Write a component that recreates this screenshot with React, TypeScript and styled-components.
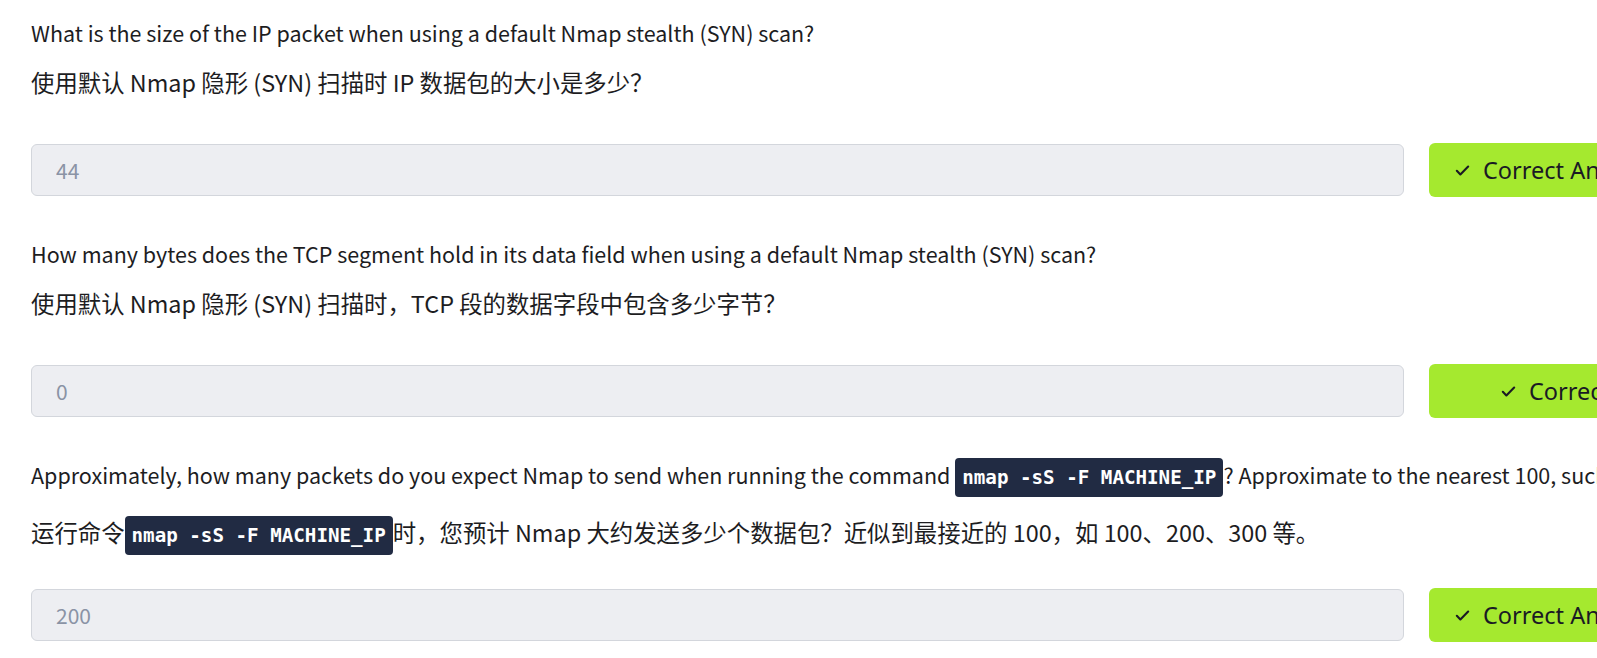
import React from "react";
import styled, { createGlobalStyle } from "styled-components";

const Global = createGlobalStyle`
  html, body { margin: 0; padding: 0; background: #ffffff; overflow: hidden; }
  body { font-family: "Noto Sans CJK SC", "Noto Sans", sans-serif; color: #1d1d1f; }
`;

const Page = styled.main`
  width: 1597px;
  padding: 17px 0 0 31px;
  box-sizing: border-box;
  overflow: hidden;
`;

const Block = styled.section`
  margin-bottom: 41px;
`;

const English = styled.p`
  margin: 0;
  font-size: 21.5px;
  line-height: 32px;
  white-space: nowrap;
`;

const Chinese = styled.p<{ $top: number }>`
  margin: ${(p) => p.$top}px 0 0;
  font-size: 23.4px;
  line-height: 36px;
  white-space: nowrap;
`;

const Code = styled.code`
  font-family: "DejaVu Sans Mono", monospace;
  font-weight: 700;
  font-size: 19.2px;
  padding: 8px 7px;
  border-radius: 4px;
  background: #212b43;
  color: #ffffff;
`;

const Row = styled.div<{ $top: number }>`
  display: flex;
  align-items: center;
  margin-top: ${(p) => p.$top}px;
  width: 1700px;
`;

const Field = styled.input`
  flex: none;
  width: 1373px;
  height: 52px;
  box-sizing: border-box;
  border: 1px solid #d3d6dc;
  border-radius: 6px;
  background: #edeef2;
  padding: 0 24px;
  font-family: "Noto Sans CJK SC", "Noto Sans", sans-serif;
  font-size: 21px;
  color: #8a93a5;
  outline: none;
`;

const Submit = styled.button<{ $indent: number }>`
  flex: none;
  display: flex;
  align-items: center;
  gap: 12px;
  margin-left: 25px;
  width: 270px;
  height: 54px;
  box-sizing: border-box;
  padding: 0 0 0 ${(p) => p.$indent}px;
  border: none;
  border-radius: 6px;
  background: #a5e92f;
  color: #1a1a24;
  font-family: "Noto Sans", "Open Sans", sans-serif;
  font-size: 23.5px;
  white-space: nowrap;
  cursor: pointer;
`;

const Check = () => (
  <svg width="17" height="17" viewBox="0 0 24 24" fill="none" stroke="#1a1a24" strokeWidth="3" strokeLinecap="round" strokeLinejoin="round">
    <path d="M4 12.5l5 5L20 6.5" />
  </svg>
);

type Q = {
  en: React.ReactNode;
  zh: React.ReactNode;
  answer: string;
  indent: number;
  zhTop: number;
  rowTop: number;
};

const cmd = <Code>nmap -sS -F MACHINE_IP</Code>;

const questions: Q[] = [
  {
    en: "What is the size of the IP packet when using a default Nmap stealth (SYN) scan?",
    zh: "使用默认 Nmap 隐形 (SYN) 扫描时 IP 数据包的大小是多少？",
    answer: "44",
    indent: 25,
    zhTop: 15,
    rowTop: 43,
  },
  {
    en: "How many bytes does the TCP segment hold in its data field when using a default Nmap stealth (SYN) scan?",
    zh: "使用默认 Nmap 隐形 (SYN) 扫描时，TCP 段的数据字段中包含多少字节？",
    answer: "0",
    indent: 71,
    zhTop: 15,
    rowTop: 43,
  },
  {
    en: (
      <>
        Approximately, how many packets do you expect Nmap to send when running the command {cmd}? Approximate to the
        nearest 100, such as 100, 200, 300 or 400.
      </>
    ),
    zh: (
      <>
        运行命令{cmd}时，您预计 Nmap 大约发送多少个数据包？近似到最接近的 100，如 100、200、300 等。
      </>
    ),
    answer: "200",
    indent: 25,
    zhTop: 20,
    rowTop: 34,
  },
];

export default function App() {
  return (
    <>
      <Global />
      <Page>
        {questions.map((q, i) => (
          <Block key={i}>
            <English>{q.en}</English>
            <Chinese $top={q.zhTop}>{q.zh}</Chinese>
            <Row $top={q.rowTop}>
              <Field readOnly value={q.answer} />
              <Submit $indent={q.indent}>
                <Check />
                Correct Answer
              </Submit>
            </Row>
          </Block>
        ))}
      </Page>
    </>
  );
}
